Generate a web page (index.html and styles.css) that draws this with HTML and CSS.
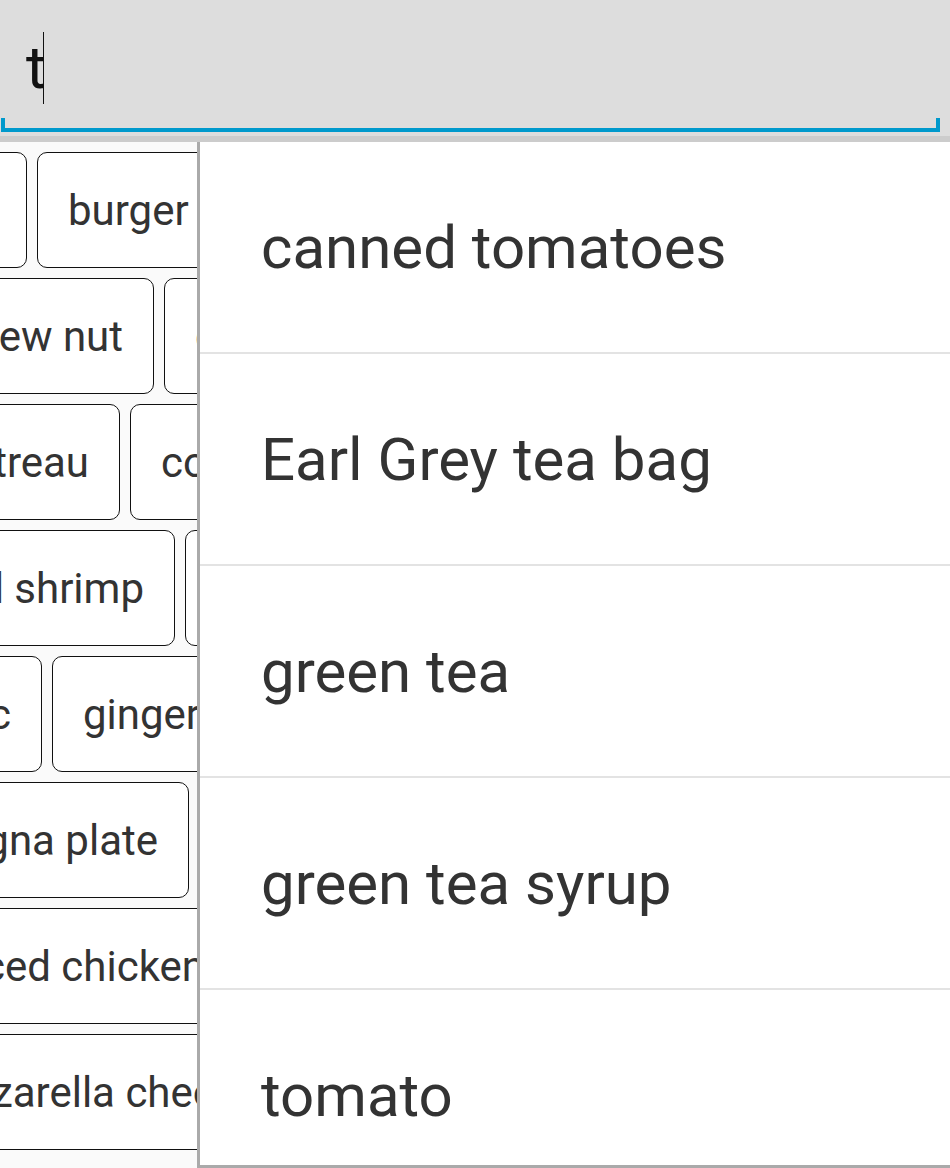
FILE: index.html
```html
<!DOCTYPE html>
<html>
<head>
<meta charset="utf-8">
<link rel="stylesheet" href="styles.css">
<title>Search</title>
</head>
<body>
<div class="screen">
  <header class="searchbar">
    <div class="field">
      <span class="typed">t</span><span class="caret"></span>
    </div>
    <div class="underline"></div>
  </header>
  <div class="divider"></div>
  <main class="chips">
    <div class="row"><div class="lead r1"><div class="chip">bread</div></div><div class="chip">burger</div><div class="chip">butter</div></div>
    <div class="row"><div class="lead r2"><div class="chip">cashew nut</div></div><div class="chip">cheese</div></div>
    <div class="row"><div class="lead r3"><div class="chip">cointreau</div></div><div class="chip">corn</div></div>
    <div class="row"><div class="lead r4"><div class="chip">boiled shrimp</div></div><div class="chip">egg</div></div>
    <div class="row"><div class="lead r5"><div class="chip">garlic</div></div><div class="chip">ginger</div></div>
    <div class="row"><div class="lead r6"><div class="chip">lasagna plate</div></div><div class="chip">lemon</div></div>
    <div class="row"><div class="lead r7"><div class="chip">minced chicken</div></div><div class="chip">milk</div></div>
    <div class="row"><div class="lead r8"><div class="chip">mozzarella cheese</div></div><div class="chip">onion</div></div>
  </main>
  <ul class="dropdown">
    <li class="item">canned tomatoes</li>
    <li class="item">Earl Grey tea bag</li>
    <li class="item">green tea</li>
    <li class="item">green tea syrup</li>
    <li class="item">tomato</li>
  </ul>
</div>
</body>
</html>
```
FILE: styles.css
```css
html, body {
  margin: 0;
  padding: 0;
  width: 950px;
  height: 1168px;
  overflow: hidden;
  background: #fafafa;
  font-family: Roboto, "Noto Sans", sans-serif;
}

.screen {
  position: relative;
  width: 950px;
  height: 1168px;
  overflow: hidden;
}

.searchbar {
  height: 136px;
  background: #dddddd;
  box-sizing: border-box;
  padding-top: 32px;
}

.field {
  display: flex;
  align-items: flex-start;
  height: 86px;
  padding-left: 26px;
}

.typed {
  font-size: 60px;
  line-height: 72px;
  color: #111;
}

.caret {
  width: 1px;
  height: 72px;
  background: #111;
  margin-left: -3px;
}

.underline {
  margin-left: 1px;
  width: 939px;
  height: 14px;
  border: 4px solid #0099cc;
  border-top: none;
  box-sizing: border-box;
}

.divider {
  height: 6px;
  background: #cccccc;
}

.chips {
  padding-top: 10px;
  display: flex;
  flex-direction: column;
  gap: 10px;
}

.row {
  display: flex;
  gap: 10px;
  height: 116px;
}

.lead {
  flex: none;
  display: flex;
  justify-content: flex-end;
}

.r1 { width: 27px; }
.r2 { width: 154px; }
.r3 { width: 120px; }
.r4 { width: 175px; }
.r5 { width: 42px; }
.r6 { width: 189px; }
.r7 { width: 236px; }
.r8 { width: 290px; }

.chip {
  flex: none;
  box-sizing: border-box;
  height: 116px;
  padding: 0 30px;
  display: flex;
  align-items: center;
  border: 1px solid #111111;
  border-radius: 10px;
  background: #ffffff;
  font-size: 42px;
  color: #333333;
  white-space: nowrap;
}

.dropdown {
  position: absolute;
  left: 197px;
  top: 142px;
  width: 753px;
  height: 1026px;
  margin: 0;
  padding: 0;
  list-style: none;
  box-sizing: border-box;
  background: #ffffff;
  border-left: 3px solid #aaaaaa;
  border-bottom: 3px solid #aaaaaa;
  overflow: hidden;
}

.item {
  height: 212px;
  box-sizing: border-box;
  border-bottom: 2px solid #e3e3e3;
  display: flex;
  align-items: center;
  padding-left: 61px;
  font-size: 60px;
  color: #333333;
  white-space: nowrap;
}
```
